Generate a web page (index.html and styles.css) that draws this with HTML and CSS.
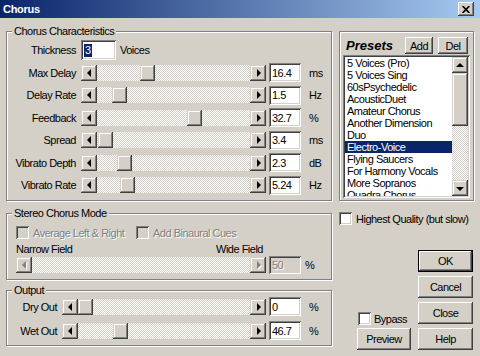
FILE: index.html
```html
<!DOCTYPE html>
<html>
<head>
<meta charset="utf-8">
<title>Chorus</title>
<link rel="stylesheet" href="styles.css">
</head>
<body>
<div class="window">
  <div class="titlebar">
    <span class="title">Chorus</span>
    <span class="xbtn"><svg width="8" height="7" viewBox="0 0 8 7"><path d="M0.6 0 L7.4 7 M7.4 0 L0.6 7" stroke="#000" stroke-width="1.7" fill="none"/></svg></span>
  </div>
  <div class="content">
    <div class="leftcol">
      <fieldset class="group chorus">
        <legend>Chorus Characteristics</legend>
        <div class="params">
          <span class="lbl">Thickness</span>
          <div class="thickrow"><span class="edit thick"><span class="hl">3</span></span><span class="voices">Voices</span></div>

          <span class="lbl">Max Delay</span>
          <div class="slider s-chorus"><span class="sbtn"><i class="tri-l"></i></span><span class="track"><span class="thumb" style="margin-left:43px"></span></span><span class="sbtn"><i class="tri-r"></i></span></div>
          <span class="edit">16.4</span><span class="unit">ms</span>

          <span class="lbl">Delay Rate</span>
          <div class="slider s-chorus"><span class="sbtn"><i class="tri-l"></i></span><span class="track"><span class="thumb" style="margin-left:15px"></span></span><span class="sbtn"><i class="tri-r"></i></span></div>
          <span class="edit">1.5</span><span class="unit">Hz</span>

          <span class="lbl">Feedback</span>
          <div class="slider s-chorus"><span class="sbtn"><i class="tri-l"></i></span><span class="track"><span class="thumb" style="margin-left:90px"></span></span><span class="sbtn"><i class="tri-r"></i></span></div>
          <span class="edit">32.7</span><span class="unit">%</span>

          <span class="lbl">Spread</span>
          <div class="slider s-chorus"><span class="sbtn"><i class="tri-l"></i></span><span class="track"><span class="thumb" style="margin-left:1px"></span></span><span class="sbtn"><i class="tri-r"></i></span></div>
          <span class="edit">3.4</span><span class="unit">ms</span>

          <span class="lbl">Vibrato Depth</span>
          <div class="slider s-chorus"><span class="sbtn"><i class="tri-l"></i></span><span class="track"><span class="thumb" style="margin-left:20px"></span></span><span class="sbtn"><i class="tri-r"></i></span></div>
          <span class="edit">2.3</span><span class="unit">dB</span>

          <span class="lbl">Vibrato Rate</span>
          <div class="slider s-chorus"><span class="sbtn"><i class="tri-l"></i></span><span class="track"><span class="thumb" style="margin-left:23px"></span></span><span class="sbtn"><i class="tri-r"></i></span></div>
          <span class="edit">5.24</span><span class="unit">Hz</span>
        </div>
      </fieldset>

      <fieldset class="group stereo">
        <legend>Stereo Chorus Mode</legend>
        <div class="stereo-body">
          <div class="chkrow">
            <span class="chkitem"><span class="chk dis"></span><span class="distext">Average Left &amp; Right</span></span>
            <span class="chkitem"><span class="chk dis"></span><span class="distext">Add Binaural Cues</span></span>
          </div>
          <div class="fieldlabels"><span>Narrow Field</span><span>Wide Field</span></div>
          <div class="srow">
            <div class="slider s-stereo"><span class="sbtn"><i class="tri-l dis"></i></span><span class="track"></span><span class="sbtn"><i class="tri-r dis"></i></span></div>
            <span class="edit dis">50</span><span class="unit">%</span>
          </div>
        </div>
      </fieldset>

      <fieldset class="group output">
        <legend>Output</legend>
        <div class="outparams">
          <span class="lbl">Dry Out</span>
          <div class="slider s-out"><span class="sbtn"><i class="tri-l"></i></span><span class="track"><span class="thumb" style="margin-left:0px"></span></span><span class="sbtn"><i class="tri-r"></i></span></div>
          <span class="edit">0</span><span class="unit">%</span>

          <span class="lbl">Wet Out</span>
          <div class="slider s-out"><span class="sbtn"><i class="tri-l"></i></span><span class="track"><span class="thumb" style="margin-left:35px"></span></span><span class="sbtn"><i class="tri-r"></i></span></div>
          <span class="edit">46.7</span><span class="unit">%</span>
        </div>
      </fieldset>
    </div>

    <div class="rightcol">
      <div class="presets">
        <div class="phead">
          <span class="ptitle">Presets</span>
          <span class="btn add">Add</span>
          <span class="btn del">Del</span>
        </div>
        <div class="list">
          <div class="items">
            <div class="item">5 Voices (Pro)</div>
            <div class="item">5 Voices Sing</div>
            <div class="item">60sPsychedelic</div>
            <div class="item">AcousticDuet</div>
            <div class="item">Amateur Chorus</div>
            <div class="item">Another Dimension</div>
            <div class="item">Duo</div>
            <div class="item sel">Electro-Voice</div>
            <div class="item">Flying Saucers</div>
            <div class="item">For Harmony Vocals</div>
            <div class="item">More Sopranos</div>
            <div class="item">Quadra Chorus</div>
          </div>
          <div class="vscroll">
            <span class="sbtn"><i class="tri-u"></i></span>
            <span class="vthumb"></span>
            <span class="vtrack"></span>
            <span class="sbtn"><i class="tri-d"></i></span>
          </div>
        </div>
      </div>
      <div class="hqrow"><span class="chk"></span><span>Highest Quality (but slow)</span></div>
      <div class="bottom">
        <div class="bleft">
          <div class="bypass"><span class="chk"></span><span>Bypass</span></div>
          <span class="btn preview">Preview</span>
        </div>
        <div class="bright">
          <span class="btn default">OK</span>
          <span class="btn">Cancel</span>
          <span class="btn">Close</span>
          <span class="btn">Help</span>
        </div>
      </div>
    </div>
  </div>
</div>
</body>
</html>
```

FILE: styles.css
```css
* { box-sizing: border-box; }
html, body { margin: 0; padding: 0; }
body {
  width: 480px;
  height: 356px;
  overflow: hidden;
  background: #d4d0c8;
  font-family: "Liberation Sans", Arial, sans-serif;
  font-size: 11px;
  letter-spacing: -0.5px;
  color: #000;
}
.window { width: 480px; height: 356px; background: #d4d0c8; }

.titlebar {
  height: 18px;
  background: linear-gradient(to right, #0a246a, #a6caf0);
  display: flex;
  align-items: center;
  justify-content: space-between;
  padding: 0 6px 0 3px;
}
.title { color: #fff; font-weight: bold; font-size: 11px; letter-spacing: -0.3px; }
.xbtn {
  width: 16px; height: 14px;
  background: #d4d0c8;
  box-shadow: inset -1px -1px #404040, inset 1px 1px #fff, inset -2px -2px #808080, inset 2px 2px #d4d0c8;
  display: flex; align-items: center; justify-content: center;
}
.xbtn svg { display: block; }

.content {
  display: grid;
  grid-template-columns: 326px 135px;
  column-gap: 7px;
  padding: 7px 0 0 6px;
}
.leftcol { display: flex; flex-direction: column; }

fieldset.group {
  margin: 0;
  padding: 0;
  min-width: 0;
  border: 1px solid #808080;
  box-shadow: inset 1px 1px #fff, 1px 1px #fff;
}
.group legend {
  margin-left: 5px;
  padding: 0 2px;
  height: 13px;
  line-height: 13px;
  background: #d4d0c8;
  white-space: nowrap;
}
.chorus { height: 176px; }
.stereo { height: 73px; margin-top: 6px !important; }
.output { height: 62px; margin-top: 4px !important; }

.params {
  display: grid;
  grid-template-columns: 74px 188px 36px 1fr;
  grid-auto-rows: 22.5px;
  align-items: center;
  padding-top: 1px;
}
.lbl { text-align: right; padding-right: 5px; white-space: nowrap; }
.thickrow { grid-column: 2 / 5; display: flex; align-items: center; }
.voices { margin-left: 4px; }
.edit.thick { width: 35px; height: 20px; padding-left: 3px; }
.hl { background: #0a246a; color: #fff; line-height: 13px; padding: 0 1px; }

.edit {
  display: flex;
  align-items: center;
  width: 32px;
  height: 19px;
  padding: 0 3px;
  background: #fff;
  white-space: nowrap;
  box-shadow: inset 1px 1px #808080, inset -1px -1px #fff, inset 2px 2px #404040, inset -2px -2px #d4d0c8;
}
.edit.dis { background: #d4d0c8; color: #808080; text-shadow: 1px 1px #fff; }
.unit { padding-left: 4px; }

.slider { display: flex; height: 16px; }
.s-chorus { width: 185px; }
.s-stereo { width: 250px; }
.s-out { width: 204px; }
.sbtn {
  flex: none;
  width: 16px; height: 16px;
  background: #d4d0c8;
  box-shadow: inset -1px -1px #404040, inset 1px 1px #d4d0c8, inset -2px -2px #808080, inset 2px 2px #fff;
  display: flex; align-items: center; justify-content: center;
}
.track {
  flex: 1;
  display: flex;
  background: repeating-conic-gradient(#fff 0 25%, #d4d0c8 0 50%) 0 0 / 2px 2px;
}
.thumb {
  flex: none;
  width: 15px; height: 16px;
  background: #d4d0c8;
  box-shadow: inset -1px -1px #404040, inset 1px 1px #d4d0c8, inset -2px -2px #808080, inset 2px 2px #fff;
}
.tri-l, .tri-r, .tri-u, .tri-d { display: block; width: 0; height: 0; }
.tri-l { border-top: 4px solid transparent; border-bottom: 4px solid transparent; border-right: 4px solid #000; margin-left: -1px; }
.tri-r { border-top: 4px solid transparent; border-bottom: 4px solid transparent; border-left: 4px solid #000; margin-left: 1px; }
.tri-u { border-left: 4px solid transparent; border-right: 4px solid transparent; border-bottom: 4px solid #000; margin-top: -1px; }
.tri-d { border-left: 4px solid transparent; border-right: 4px solid transparent; border-top: 4px solid #000; margin-top: 1px; }
.tri-l.dis { border-right-color: #808080; filter: drop-shadow(1px 1px 0 #fff); }
.tri-r.dis { border-left-color: #808080; filter: drop-shadow(1px 1px 0 #fff); }

.chk {
  flex: none;
  width: 13px; height: 13px;
  background: #fff;
  box-shadow: inset 1px 1px #808080, inset -1px -1px #fff, inset 2px 2px #404040, inset -2px -2px #d4d0c8;
}
.chk.dis { background: #d4d0c8; }
.distext { color: #808080; text-shadow: 1px 1px #fff; }

.stereo-body { padding: 6px 0 0 9px; }
.chkrow { display: grid; grid-template-columns: 120px auto; height: 13px; }
.chkitem { display: flex; align-items: center; gap: 4px; white-space: nowrap; }
.fieldlabels {
  display: flex; justify-content: space-between;
  width: 247px; height: 12px; line-height: 12px;
  margin-top: 4px;
}
.srow { display: flex; align-items: center; height: 18px; margin-top: 1px; }
.srow .edit { margin-left: 3px; height: 18px; }

.outparams {
  display: grid;
  grid-template-columns: 55px 207px 36px 1fr;
  grid-auto-rows: 19px;
  row-gap: 5px;
  align-items: center;
}

.rightcol { display: flex; flex-direction: column; }
.presets {
  margin-top: 6px;
  height: 170px;
  border: 1px solid #808080;
  box-shadow: inset 1px 1px #fff, 1px 1px #fff;
}
.phead {
  display: flex; align-items: center;
  height: 17px; margin-top: 5px;
  padding: 0 5px 0 6px;
}
.ptitle { flex: 1; font-weight: bold; font-style: italic; font-size: 13px; letter-spacing: 0; }
.btn {
  display: flex; align-items: center; justify-content: center;
  height: 22px;
  background: #d4d0c8;
  box-shadow: inset -1px -1px #404040, inset 1px 1px #fff, inset -2px -2px #808080, inset 2px 2px #d4d0c8;
  white-space: nowrap;
}
.btn.default { box-shadow: inset 0 0 0 1px #000, inset -2px -2px #404040, inset 2px 2px #fff, inset -3px -3px #808080; }
.add { width: 28px; height: 17px; }
.del { width: 30px; height: 17px; margin-left: 5px; }

.list {
  display: flex;
  margin: 1px 0 0 3px;
  width: 127px; height: 143px;
  padding: 2px;
  background: #fff;
  box-shadow: inset 1px 1px #808080, inset -1px -1px #fff, inset 2px 2px #404040, inset -2px -2px #d4d0c8;
}
.items { flex: 1; overflow: hidden; }
.item { height: 12px; line-height: 12px; padding-left: 2px; white-space: nowrap; }
.item.sel { background: #0a246a; color: #fff; }
.vscroll { width: 16px; display: flex; flex-direction: column; }
.vthumb {
  height: 53px;
  background: #d4d0c8;
  box-shadow: inset -1px -1px #404040, inset 1px 1px #d4d0c8, inset -2px -2px #808080, inset 2px 2px #fff;
}
.vtrack { flex: 1; background: repeating-conic-gradient(#fff 0 25%, #d4d0c8 0 50%) 0 0 / 2px 2px; }

.hqrow { display: flex; align-items: center; gap: 4px; height: 13px; margin-top: 11px; white-space: nowrap; }

.bottom {
  display: grid;
  grid-template-columns: 72px 55px;
  column-gap: 7px;
  margin-top: 25px;
}
.bleft { display: flex; flex-direction: column; justify-content: flex-end; }
.bypass { display: flex; align-items: center; gap: 3px; height: 13px; margin: 0 0 3px 19px; }
.preview { width: 54px; margin-left: 18px; }
.bright { display: flex; flex-direction: column; gap: 4px; }
```
